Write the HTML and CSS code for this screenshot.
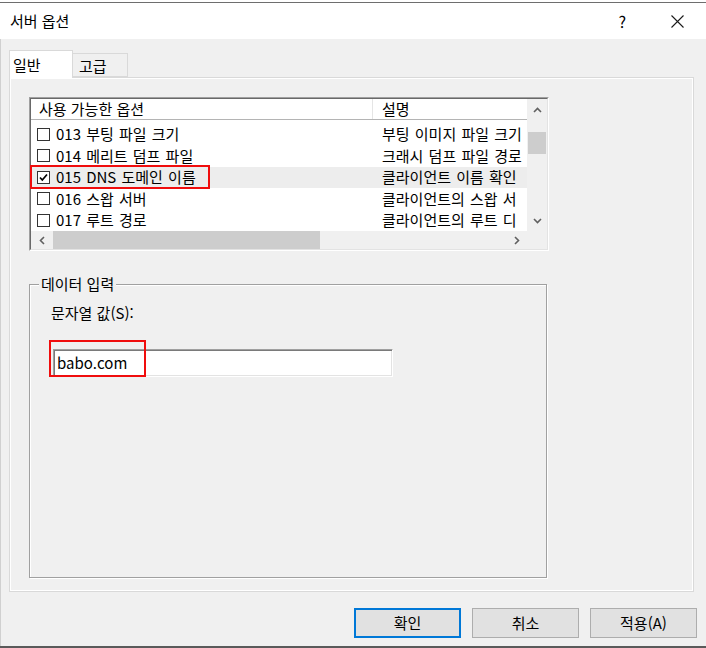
FILE: index.html
```html
<!DOCTYPE html>
<html lang="ko">
<head>
<meta charset="utf-8">
<title>서버 옵션</title>
<link rel="stylesheet" href="styles.css">
</head>
<body>
<div class="window">
  <div class="topstrip"></div>
  <header class="titlebar">
    <span class="title">서버 옵션</span>
    <span class="help">?</span>
    <span class="close"><svg width="13" height="13" viewBox="0 0 13 13"><path d="M0.5 0.5L12.5 12.5M12.5 0.5L0.5 12.5" stroke="#1a1a1a" stroke-width="1.1" fill="none"/></svg></span>
  </header>
  <main class="body">
    <div class="tabs">
      <div class="tab tab-general active">일반</div>
      <div class="tab tab-advanced">고급</div>
    </div>
    <section class="panel">
      <div class="listview">
        <div class="lv-inner">
          <div class="lv-content">
            <div class="lv-header">
              <div class="h1">사용 가능한 옵션</div>
              <div class="h2">설명</div>
            </div>
            <div class="lv-rows">
              <div class="row"><span class="c1"><span class="cb"></span>013 부팅 파일 크기</span><span class="c2">부팅 이미지 파일 크기</span></div>
              <div class="row"><span class="c1"><span class="cb"></span>014 메리트 덤프 파일</span><span class="c2">크래시 덤프 파일 경로</span></div>
              <div class="row selected"><span class="c1"><span class="cb checked"><svg width="11" height="11" viewBox="0 0 11 11"><path d="M2 5.5L4.3 8L9 2.5" fill="none" stroke="#000" stroke-width="1.7"/></svg></span>015 DNS 도메인 이름</span><span class="c2">클라이언트 이름 확인</span></div>
              <div class="row"><span class="c1"><span class="cb"></span>016 스왑 서버</span><span class="c2">클라이언트의 스왑 서</span></div>
              <div class="row"><span class="c1"><span class="cb"></span>017 루트 경로</span><span class="c2">클라이언트의 루트 디</span></div>
            </div>
          </div>
          <div class="vscroll">
            <div class="sb-btn"><svg width="9" height="6" viewBox="0 0 9 6"><path d="M1 5L4.5 1.5L8 5" fill="none" stroke="#606060" stroke-width="1.6"/></svg></div>
            <div class="vthumb"></div>
            <div class="sb-btn sb-end"><svg width="9" height="6" viewBox="0 0 9 6"><path d="M1 1L4.5 4.5L8 1" fill="none" stroke="#606060" stroke-width="1.6"/></svg></div>
          </div>
          <div class="hscroll">
            <div class="sb-hbtn"><svg width="6" height="9" viewBox="0 0 6 9"><path d="M5 1L1.5 4.5L5 8" fill="none" stroke="#606060" stroke-width="1.6"/></svg></div>
            <div class="hthumb"></div>
            <div class="sb-hbtn sb-end"><svg width="6" height="9" viewBox="0 0 6 9"><path d="M1 1L4.5 4.5L1 8" fill="none" stroke="#606060" stroke-width="1.6"/></svg></div>
          </div>
          <div class="corner"></div>
          <div class="mark mark-row"></div>
        </div>
      </div>

      <fieldset class="group">
        <legend>데이터 입력</legend>
        <div class="group-body">
          <div class="label">문자열 값(S):</div>
          <div class="field">
            <input class="input" type="text" value="babo.com" readonly>
            <div class="mark mark-input"></div>
          </div>
        </div>
      </fieldset>
    </section>
    <div class="buttons">
      <button class="btn default">확인</button>
      <button class="btn">취소</button>
      <button class="btn">적용(A)</button>
    </div>
  </main>
  <div class="bottomstrip"></div>
</div>
</body>
</html>
```

FILE: styles.css
```css
* { box-sizing: border-box; }
html, body { margin: 0; padding: 0; }
body {
  width: 706px;
  height: 648px;
  overflow: hidden;
  background: #f0f0f0;
  font-family: "Noto Sans CJK KR", "Noto Sans", sans-serif;
  font-size: 15px;
  line-height: 20px;
  color: #000;
}
.window { display: flex; flex-direction: column; height: 648px; }
.topstrip { height: 3px; background: #fff; border-bottom: 1px solid #6e6e6e; flex: none; }
.titlebar {
  height: 36px; flex: none; background: #fff;
  display: flex; align-items: center; padding-left: 10px;
}
.title { flex: 1; }
.help { font-size: 16px; margin-right: 45px; }
.close { width: 13px; height: 13px; margin-right: 22px; display: flex; }
.body {
  flex: 1;
  border-left: 1px solid #d0d0d0;
  padding: 11px 9px 0 8px;
  display: flex; flex-direction: column;
}
.tabs { display: flex; align-items: flex-end; height: 27px; position: relative; z-index: 1; flex: none; }
.tab { border: 1px solid #d9d9d9; white-space: nowrap; }
.tab-general {
  width: 64px; height: 28px; margin-bottom: -1px;
  background: #fff; border-bottom: none;
  padding: 4px 0 0 3px;
}
.tab-advanced {
  width: 55px; height: 24px; border-left: none;
  background: #f0f0f0; padding: 2px 0 0 6px;
}
.panel {
  width: 685px; height: 515px; flex: none;
  border: 1px solid #d9d9d9;
  box-shadow: inset 1px 1px 0 #fff, inset -1px -1px 0 #fff;
  padding: 19px 0 0 19px;
}
.listview {
  width: 520px; height: 154px;
  border: 1px solid; border-color: #a0a0a0 #fff #fff #a0a0a0;
}
.lv-inner {
  position: relative;
  height: 100%;
  border: 1px solid; border-color: #696969 #e3e3e3 #e3e3e3 #696969;
  display: grid;
  grid-template-columns: 496px 20px;
  grid-template-rows: 132px 18px;
  background: #fff;
}
.lv-content { overflow: hidden; white-space: nowrap; }
.lv-header { display: flex; height: 21px; border-bottom: 1px solid #b4b4b4; }
.h1 { width: 342px; flex: none; border-right: 1px solid #e5e5e5; padding-left: 8px; }
.h2 { padding-left: 9px; }
.lv-rows { padding-top: 3.5px; }
.row { display: flex; height: 21.5px; align-items: center; }
.row.selected { background: #ededed; }
.c1 { width: 342px; flex: none; display: flex; align-items: center; padding-left: 6px; gap: 6px; word-spacing: 1px; }
.c2 { padding-left: 9px; word-spacing: 1px; }
.cb { width: 13px; height: 13px; border: 1px solid #333; background: #fff; display: flex; align-items: center; justify-content: center; flex: none; }
.vscroll { background: #f0f0f0; display: flex; flex-direction: column; }
.sb-btn { height: 21px; display: flex; align-items: center; justify-content: center; }
.sb-end { margin-top: auto; }
.vthumb { margin: 12px 0 0 1px; width: 18px; height: 21.5px; background: #cdcdcd; }
.hscroll { background: #f0f0f0; display: flex; }
.sb-hbtn { width: 21px; display: flex; align-items: center; justify-content: center; }
.hscroll .sb-end { margin-top: 0; margin-left: auto; }
.hthumb { margin-left: 1px; width: 267px; background: #cdcdcd; }
.corner { background: #f0f0f0; }
.mark { position: absolute; border: 2px solid #f00d0d; }
.mark-row { left: -1px; top: 66px; width: 180px; height: 24px; }

.group {
  margin: 23px 0 0 0; padding: 0;
  width: 518px; min-width: 0;
  border: 1px solid #a0a0a0;
  box-shadow: 1px 1px 0 #fff, inset 1px 1px 0 #fff;
}
.group legend { margin-left: 9px; padding: 0 2px; line-height: 20px; background: #f0f0f0; }
.group-body { height: 283px; padding: 9px 0 0 21px; }
.field { position: relative; margin: 26px 0 0 2px; width: 340px; }
.input {
  display: block; width: 340px; height: 28px; margin: 0;
  border: 1px solid; border-color: #a0a0a0 #fff #fff #a0a0a0;
  box-shadow: inset 1px 1px 0 #7a7a7a, inset -1px -1px 0 #e3e3e3;
  background: #fff; padding: 0 0 2px 3px;
  font: inherit; color: #000; outline: none;
}
.mark-input { left: -4px; top: -9px; width: 97px; height: 37px; }

.buttons { display: flex; justify-content: flex-end; gap: 11px; margin-top: 16px; flex: none; }
.btn {
  width: 107px; height: 30px; margin: 0; padding: 0;
  background: #e1e1e1; border: 1px solid #adadad;
  font: inherit; color: #000;
}
.btn.default { border: 2px solid #0078d7; }
.bottomstrip { height: 2px; flex: none; background: #5a5a5a; }
```
